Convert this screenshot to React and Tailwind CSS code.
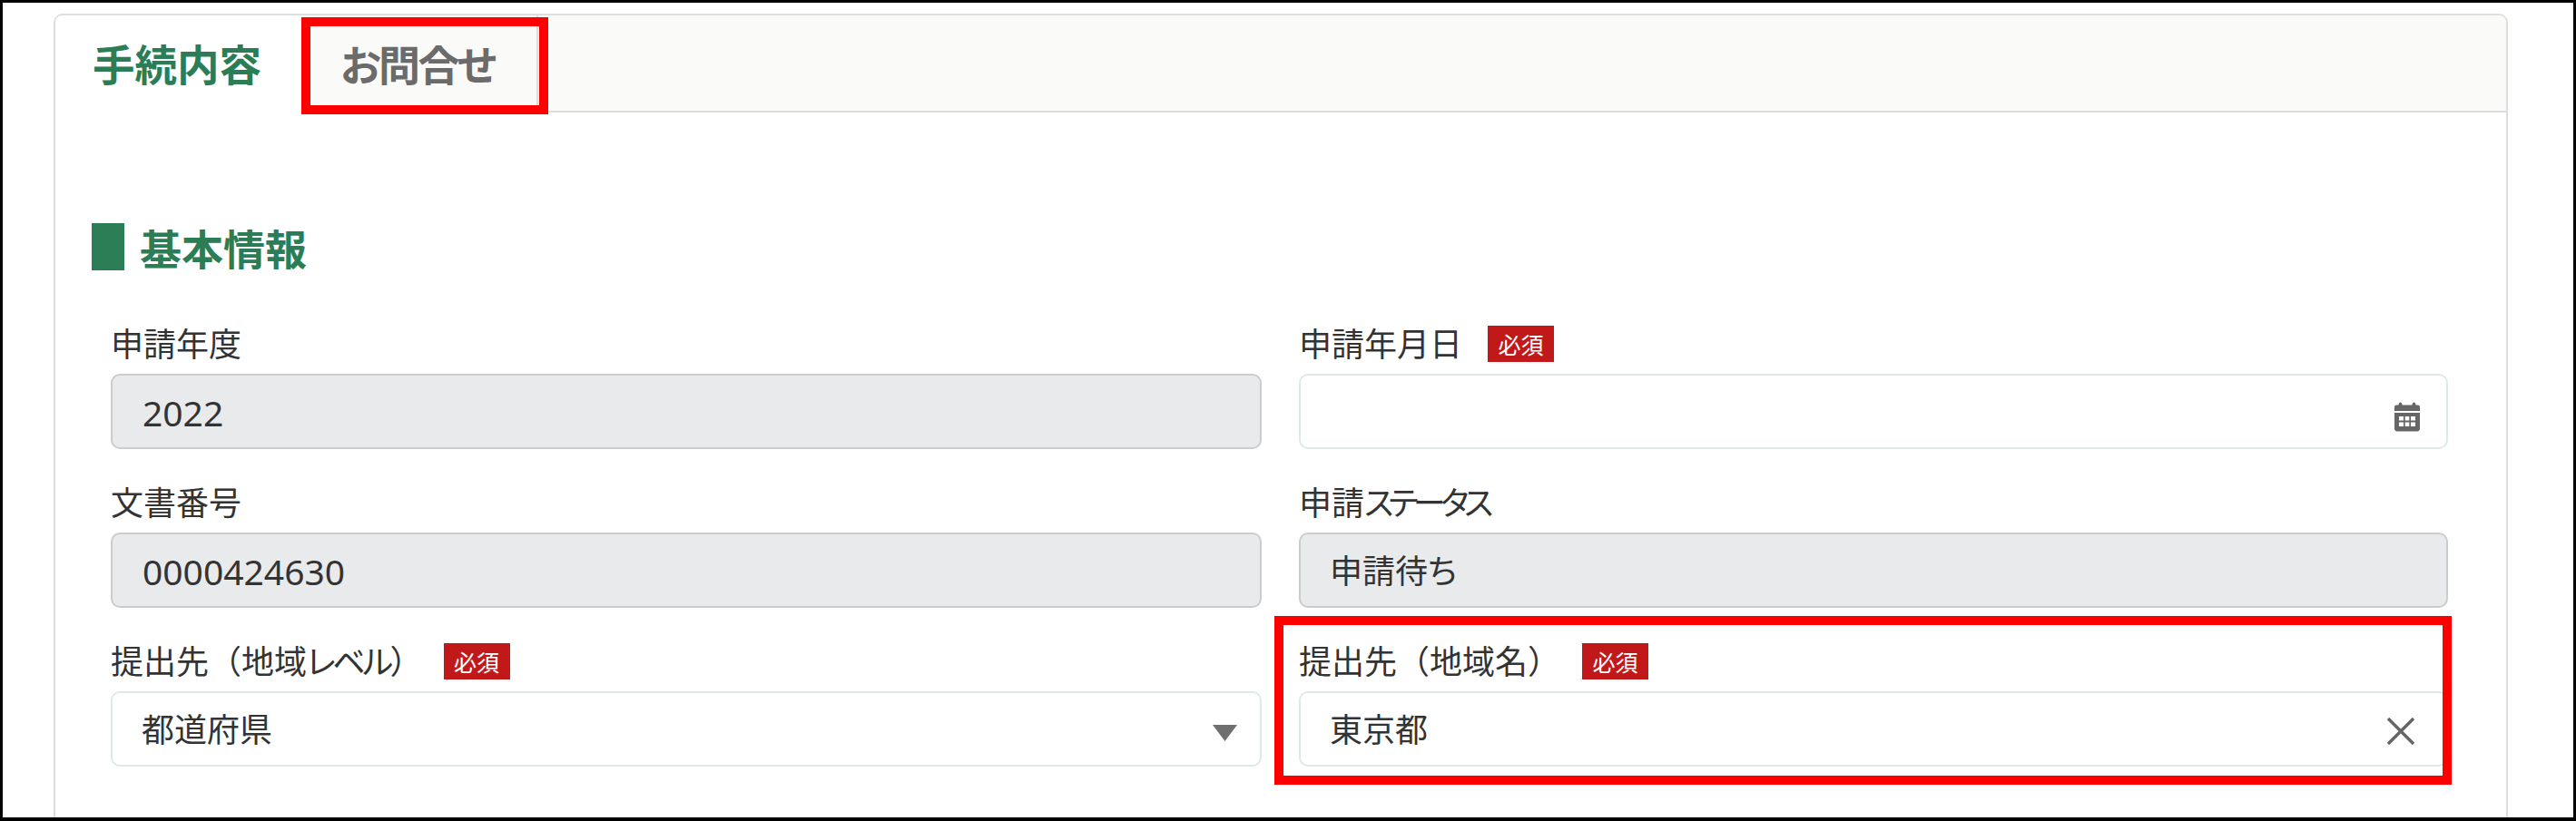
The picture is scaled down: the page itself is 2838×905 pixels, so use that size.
const jp = "font-['Noto_Sans_CJK_JP',sans-serif]";

function Badge({ className = "" }) {
  return (
    <span className={`flex h-[40px] w-[73px] shrink-0 items-center justify-center bg-[#c1191a] text-[25px] leading-none text-white ${className}`}>
      必須
    </span>
  );
}

function Label({ children, required, gap = "ml-[28px]" }) {
  return (
    <div className="flex h-[40px] items-center text-[36px] leading-none text-[#333333]">
      <span className="-mt-[5px] whitespace-nowrap">{children}</span>
      {required && <Badge className={gap} />}
    </div>
  );
}

function Field({ disabled, value, numeric, children }) {
  return (
    <div
      className={`mt-[13px] flex h-[83px] items-center justify-between rounded-[10px] border-2 pr-[28px] leading-none text-[#333333] ${
        numeric ? "pl-[33px]" : "pl-[32px]"
      } ${disabled ? "border-[#cbcdcd] bg-[#e9eaec]" : "border-[#deeae6] bg-white"}`}
    >
      {numeric ? (
        <span className="pt-[1px] font-['Noto_Sans',sans-serif] text-[39px]">{value}</span>
      ) : (
        <span className="pb-[3px] text-[36px] [font-feature-settings:'palt']">{value}</span>
      )}
      {children}
    </div>
  );
}

function CalendarIcon() {
  return (
    <svg width="32" height="34" viewBox="0 0 32 34" className="mt-[11px] mr-[-1px]" fill="#666666">
      <path d="M2 11V6.500C2 5.500 3 4.500 4 4.500H6.500C6.500 0.500 10.500 0.500 10.500 4.500H21.500C21.500 0.500 25.500 0.500 25.500 4.500H28C29 4.500 30 5.500 30 6.500V11Z" />
      <path
        fillRule="evenodd"
        d="M2 13H30V30C30 32 29 33.500 27 33.500H5C3 33.500 2 32 2 30ZM7 17V21.500H12V17ZM13.700 17V21.500H18.300V17ZM20 17V21.500H25V17ZM7 23.500V28H12V23.500ZM13.700 23.500V28H18.300V23.500ZM20 23.500V28H25V23.500Z"
      />
    </svg>
  );
}

function CaretIcon() {
  return (
    <svg width="27" height="18" viewBox="0 0 27 18" className="mt-[8px] -mr-[3px]" fill="#6f6f6f">
      <path d="M0 0H27L13.500 18Z" />
    </svg>
  );
}

function CloseIcon() {
  return (
    <svg width="30" height="30" viewBox="0 0 30 30" className="mr-[7px] mt-[4px]" stroke="#666666" strokeWidth="3.500" fill="none">
      <path d="M1 1L29 29M29 1L1 29" />
    </svg>
  );
}

export default function App() {
  return (
    <div className={`relative box-border flex h-[905px] w-full flex-col overflow-hidden border-[3px] border-b-4 border-black bg-white ${jp}`}>
      <div className="ml-[56px] mr-[72px] mt-[12px] flex flex-1 flex-col rounded-t-[10px] border-2 border-b-0 border-[#dddddd]">
        <div className="flex h-[107px] rounded-t-[8px] border-b-2 border-[#dddddd] bg-[#fafaf8]">
          <div className="relative -mb-[2px] flex h-[107px] w-[273px] items-start rounded-tl-[8px] bg-white pl-[41px] pt-[24px] text-[46.500px] font-bold leading-[56px] text-[#2a7d55]">
            手続内容
          </div>
          <div className="flex w-[259px] items-start border-r-2 border-[#dddddd] pl-[41px] pt-[24px] text-[46px] font-bold leading-[56px] tracking-[-2.5px] text-[#6b6b6b] [font-feature-settings:'palt']">
            お問合せ
          </div>
        </div>
        <div className="pl-[61px] pr-[64px] pt-[122px]">
          <div className="-ml-[21px] flex h-[52px] items-center gap-[17px] text-[46px] font-bold leading-none text-[#2a7d55]">
            <span className="h-[52px] w-[36px] bg-[#2a7d55]" />
            <span>基本情報</span>
          </div>
          <div className="mt-[61px] grid grid-cols-[1268px_1fr] gap-x-[41px] gap-y-[39px]">
            <div>
              <Label>申請年度</Label>
              <Field disabled numeric value="2022" />
            </div>
            <div>
              <Label required>申請年月日</Label>
              <Field>
                <CalendarIcon />
              </Field>
            </div>
            <div>
              <Label>文書番号</Label>
              <Field disabled numeric value="0000424630" />
            </div>
            <div>
              <Label>
                申請<span className="tracking-[-5.5px] [font-feature-settings:'palt']">ステータス</span>
              </Label>
              <Field disabled value="申請待ち" />
            </div>
            <div>
              <Label required gap="ml-[23px]">
                提出先（地域<span className="tracking-[-3.5px] [font-feature-settings:'palt']">レベル</span>）
              </Label>
              <Field value="都道府県">
                <CaretIcon />
              </Field>
            </div>
            <div>
              <Label required gap="ml-[24px]">提出先（地域名）</Label>
              <Field value="東京都">
                <CloseIcon />
              </Field>
            </div>
          </div>
        </div>
      </div>
      <div className="absolute left-[329px] top-[16px] h-[107px] w-[272px] border-[10px] border-[#ff0000]" />
      <div className="absolute left-[1401px] top-[676px] h-[186px] w-[1297px] border-[10px] border-[#ff0000]" />
    </div>
  );
}
